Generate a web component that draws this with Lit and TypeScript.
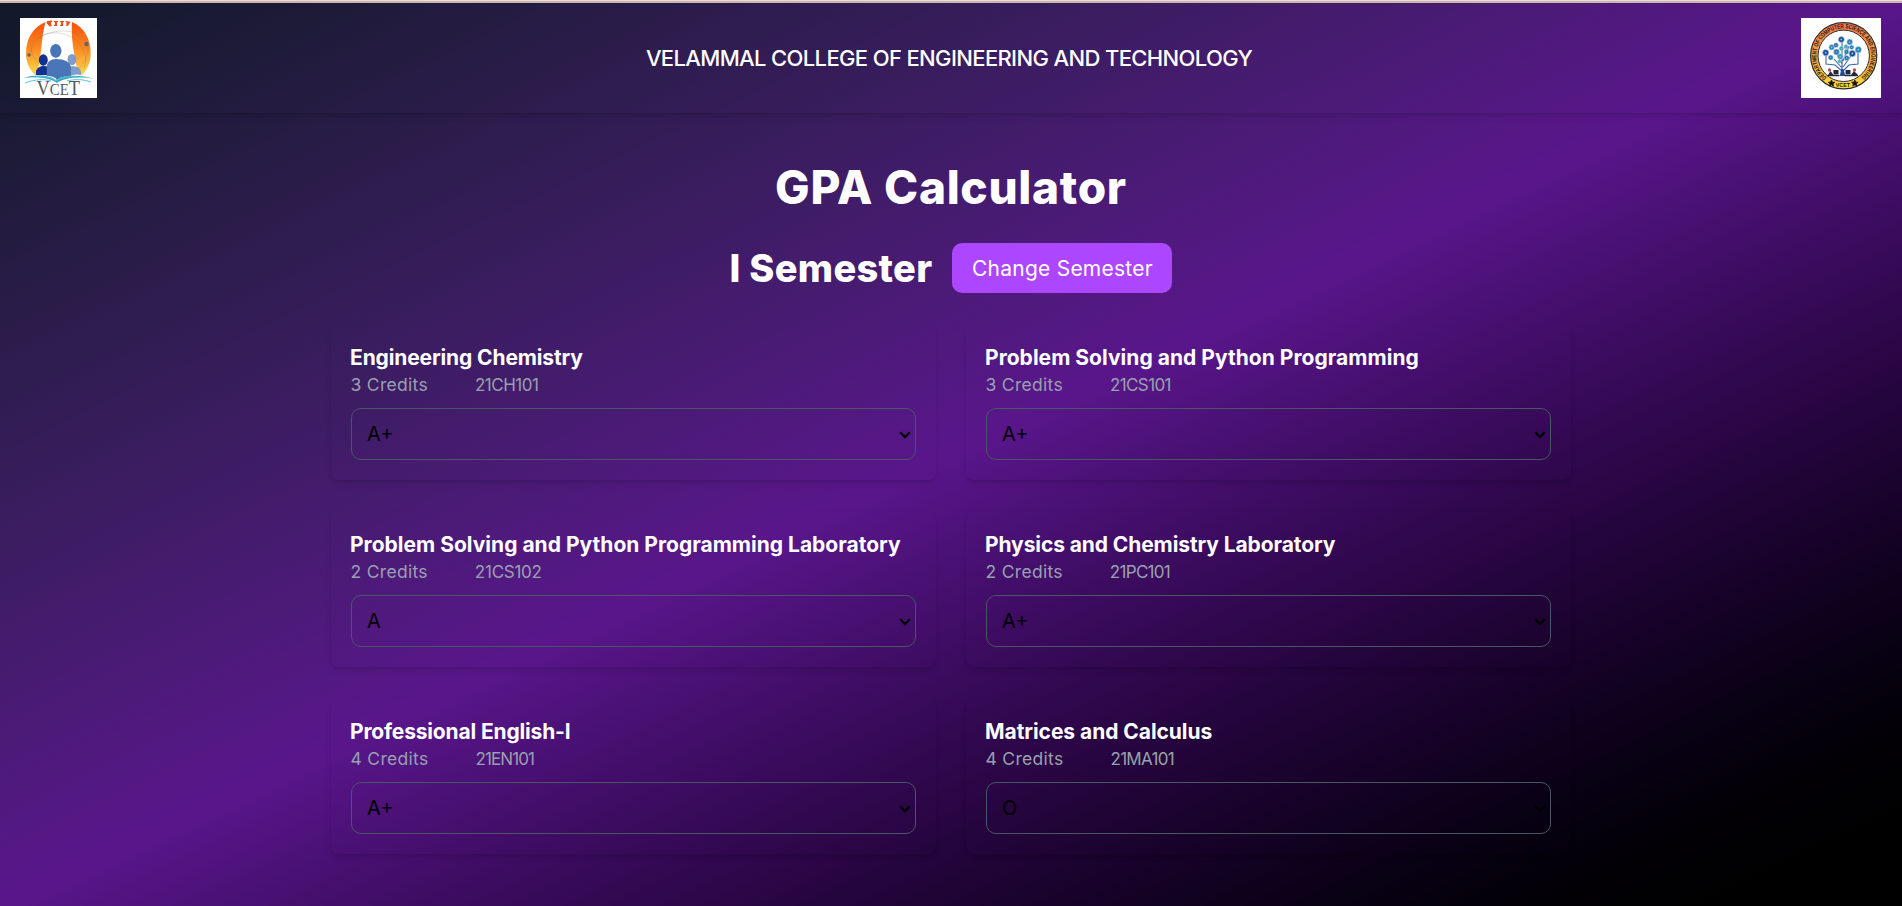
import { LitElement, html, css, svg } from "lit";
import { customElement, property } from "lit/decorators.js";
import { styleMap } from "lit/directives/style-map.js";

interface Course {
  title: string;
  credits: number;
  code: string;
  grade: string;
  /** letter spacing of the title and of the course code, in pixels */
  titleTrack: number;
  codeTrack: number;
}

const COURSES: Course[] = [
  { title: "Engineering Chemistry", credits: 3, code: "21CH101", grade: "A+", titleTrack: -0.13, codeTrack: -0.5 },
  { title: "Problem Solving and Python Programming", credits: 3, code: "21CS101", grade: "A+", titleTrack: 0.03, codeTrack: -0.6 },
  { title: "Problem Solving and Python Programming Laboratory", credits: 2, code: "21CS102", grade: "A", titleTrack: 0.01, codeTrack: -0.25 },
  { title: "Physics and Chemistry Laboratory", credits: 2, code: "21PC101", grade: "A+", titleTrack: -0.1, codeTrack: -0.7 },
  { title: "Professional English-I", credits: 4, code: "21EN101", grade: "A+", titleTrack: -0.16, codeTrack: -0.9 },
  { title: "Matrices and Calculus", credits: 4, code: "21MA101", grade: "O", titleTrack: -0.05, codeTrack: -0.7 },
];

const GRADES = ["O", "A+", "A", "B+", "B", "C"];

@customElement("college-logo")
export class CollegeLogo extends LitElement {
  static styles = css`
    :host { display: block; width: 77px; height: 80px; background: #fff; }
    .art { display: block; }
    .word { font-family: "Liberation Serif", serif; fill: #55565c; }
  `;
  render() {
    return html`<svg class="art" width="77" height="80" viewBox="0 0 77 80">
      <defs>
        <linearGradient id="sun" x1="0" y1="0" x2="0" y2="1">
          <stop offset="0" stop-color="#f9500a" />
          <stop offset="0.5" stop-color="#fb8a22" />
          <stop offset="1" stop-color="#fdd94c" />
        </linearGradient>
      </defs>
      <path d="M25.500 4C13 9 6 21 6 35c0 9 3 16 9 22h2.500c1-8 2.500-16 3.500-24 1-7 1-15 4.500-29z" fill="url(#sun)" />
      <path d="M52 4c12 5 18.700 17 18.700 31 0 9-3 16-8.500 22h-3.500c-2-7-3.500-15-5-24-1.200-8-2.500-18-1.700-29z" fill="url(#sun)" />
      <path d="M27 3l5-.5.4 1.400-1.200.2v3l1 .8-2.700.6-3-3.800zM34 3h4v1l-1 .5v3l1 .5h-4v-1l1-.5V4.500l-1-.5zM40 3h4v1l-1 .5v3l1 .5h-4v-1l1-.5V4.500l-1-.5zM45.500 3l5 .8-2.600 4.200-2.400-.5.900-.8V4.300l-.9-.3z" fill="#e8501c" />
      <path d="M11 38C9 22 25 14 41 13c17-.5 28 8 27 20-1 9-6 15-11 18M13 22C8 32 14 43 24 50M20 19c9-6 24-6 36 3 8 7 12 18 8 28" fill="none" stroke="#777" stroke-opacity=".5" stroke-width=".5" />
      <circle cx="66.500" cy="26" r="2.200" fill="#666" />
      <circle cx="9" cy="37" r="1.800" fill="#666" />
      <g fill="#11308f"><ellipse cx="23.300" cy="42" rx="4.500" ry="5.800" /><path d="M16 57v-4c1-3 4-5 8-5 3 0 5 1 6 3v6z" /></g>
      <g fill="#7f9ccc"><ellipse cx="52" cy="41.500" rx="4.500" ry="5.600" /><path d="M45 59v-9c9-4 16-1 16 4v3c-5-1-10 0-14 2z" /></g>
      <g fill="#4a76b8"><ellipse cx="35.800" cy="32.800" rx="5.700" ry="6.900" /><path d="M26.700 59V49c0-5 4-8 9.300-8 8 0 15 3 15 9v8c-7 0-12 2-14 4-2-3-5-4-10.300-4z" /></g>
      <path d="M3 60c12-4 27-3 33 2 6-5 24-6 38-1-14-3-31-1-37 4-7-5-20-7-34-5z" fill="#36a9c9" />
      <path d="M5 65c10-4 20-4 26-2M71 64c-8-3-17-3-24-1M14 59c9-1 17 0 22 4 5-4 12-5 22-4" fill="none" stroke="#5cc3da" stroke-width="1" />
      <text class="word" x="16.500" y="76.500" font-size="21" textLength="43.500" lengthAdjust="spacingAndGlyphs">V<tspan font-size="17">CE</tspan>T</text>
    </svg>`;
  }
}

@customElement("department-logo")
export class DepartmentLogo extends LitElement {
  static styles = css`
    :host { display: block; width: 80px; height: 80px; background: #fff; }
    .art { display: block; }
    .ring { font: 700 6.200px "Liberation Sans", sans-serif; fill: #2b1608; }
  `;
  render() {
    const nodes: [number, number, number, string][] = [
      [40.300, 21.500, 3, "#1c4d94"], [30.700, 29.300, 2.800, "#3d83b8"], [48.700, 24, 2.900, "#2f80b8"], [24.700, 34.700, 3.100, "#19469b"],
      [35, 27.200, 2.400, "#2865a8"], [45, 28.700, 2.200, "#40a7b7"], [51.300, 35.600, 3.300, "#1b4f98"], [57.300, 31.700, 3.200, "#2b7fb8"],
      [29.700, 39.600, 2.500, "#2a75b0"], [39.300, 38.500, 2.800, "#3794bb"], [45.700, 40, 2.600, "#2b72b0"], [35.500, 34, 2.900, "#2a6cae"],
      [38.300, 43.500, 1.700, "#30b0a0"], [45.500, 33.900, 2.400, "#2369ad"], [40.300, 30.500, 2.300, "#31a4b1"], [50.700, 29.300, 2.200, "#2a75b0"],
    ];
    return html`<svg class="art" width="80" height="80" viewBox="0 0 80 80">
      <defs>
        <linearGradient id="ring" x1="0" y1="0" x2="0" y2="1">
          <stop offset="0" stop-color="#ef7650" />
          <stop offset=".5" stop-color="#f6a343" />
          <stop offset="1" stop-color="#f8dc3c" />
        </linearGradient>
        <path id="arc" d="M25.600 59.300A27.500 27.500 0 1 1 59.600 59.500" />
      </defs>
      <circle cx="42.700" cy="37.800" r="33.100" fill="url(#ring)" stroke="#302c2b" stroke-width="1.200" />
      <circle cx="42.700" cy="37.800" r="25.700" fill="#fff" stroke="#302c2b" stroke-width="1" />
      <text class="ring"><textPath href="#arc" textLength="135" lengthAdjust="spacingAndGlyphs">DEPARTMENT OF COMPUTER SCIENCE AND ENGINEERING</textPath></text>
      <text class="ring" x="34.700" y="69.200" textLength="14.500" lengthAdjust="spacingAndGlyphs">VCET</text>
      <path d="M30.500 62l.9 2.200 2.400.1-1.900 1.500.7 2.300-2.100-1.300-2 1.300.6-2.300-1.900-1.500 2.400-.1zM53.800 62l.9 2.200 2.400.1-1.900 1.500.7 2.300-2.100-1.300-2 1.300.6-2.300-1.900-1.500 2.400-.1z" fill="#111" stroke="#111" stroke-width=".8" />
      <path d="M41 57V24M41 53l-7-6-9-1v-9M41 50l-8-9M42 53l6-6 9-1V34M42 49l8-11M41 46l-5-10M42 43l6-15" fill="none" stroke="#3c64ad" stroke-width="1.100" />
      <path d="M38.800 58l1.500-7h2l2.200 7z" fill="#224a91" />
      ${nodes.map(([x, y, r, c]) => svg`<circle cx=${x} cy=${y} r=${r} fill=${c} stroke="#b9dbea" stroke-width=".6" /><circle cx=${x} cy=${y} r=${r * 0.3} fill="#8fc0dc" />`)}
      <g fill="#23273b"><path d="M32.500 52h5v4.500h-5zM44.500 52h5v4.500h-5zM27 57l2.500-4 3 4zM50 57l3-4 4 4zM26 57h12.500v1.200H26zM44 57h13v1.200H44z" /></g>
      <circle cx="28.500" cy="52" r="1.700" fill="#b0563c" />
      <circle cx="53.500" cy="52" r="1.700" fill="#b0563c" />
    </svg>`;
  }
}

@customElement("course-card")
export class CourseCard extends LitElement {
  @property({ attribute: false }) course!: Course;

  static styles = css`
    :host {
      display: block;
      box-sizing: border-box;
      height: 155px;
      padding: 19px 20px 20px;
      border-radius: 8px;
      box-shadow: 0 4px 6px -1px rgba(0, 0, 0, 0.1), 0 2px 4px -2px rgba(0, 0, 0, 0.1);
    }
    .title { margin: 0 0 0 -1px; height: 28px; font-size: 21px; line-height: 28px; font-weight: 700; color: #fff; white-space: nowrap; }
    .meta { display: flex; gap: 47px; margin-left: -0.5px; height: 25px; font-size: 17px; line-height: 26px; color: #99a1af; }
    .credits { font-size: 17.5px; letter-spacing: 0.3px; }
    .field { display: grid; align-items: center; width: 565px; margin-top: 11px; }
    .grade {
      grid-area: 1 / 1;
      appearance: none;
      box-sizing: border-box;
      width: 565px;
      height: 52px;
      padding: 0 0 0 15px;
      background: transparent;
      border: 1px solid #4a5565;
      border-radius: 10px;
      color: #000;
      font: 400 20px "Inter", sans-serif;
    }
    .chevron { grid-area: 1 / 1; justify-self: end; margin: 2px 5px 0 0; pointer-events: none; }
  `;

  render() {
    const c = this.course;
    return html`
      <h3 class="title" style=${styleMap({ letterSpacing: `${c.titleTrack}px` })}>${c.title}</h3>
      <div class="meta">
        <span class="credits">${c.credits} Credits</span>
        <span style=${styleMap({ letterSpacing: `${c.codeTrack}px` })}>${c.code}</span>
      </div>
      <div class="field">
        <select class="grade">
          ${GRADES.map((g) => html`<option ?selected=${g === c.grade}>${g}</option>`)}
        </select>
        <svg class="chevron" width="12" height="8" viewBox="0 0 12 8">
          <path d="M1.200 1.200L6 6l4.800-4.800" fill="none" stroke="#000" stroke-width="2.300" />
        </svg>
      </div>
    `;
  }
}

@customElement("app-root")
export class AppRoot extends LitElement {
  static styles = css`
    :host {
      display: block;
      box-sizing: border-box;
      height: 906px;
      overflow: hidden;
      font-family: "Inter", "Open Sans", sans-serif;
      background: linear-gradient(to bottom right in oklab, #101828, #59168b, #000);
      color: #fff;
    }
    .strip { height: 1px; background: #ecdcd6; border-bottom: 2px solid #cdb6b0; }
    .bar {
      display: flex;
      align-items: center;
      justify-content: space-between;
      box-sizing: border-box;
      height: 110px;
      padding: 0 21px 0 20px;
      box-shadow: 0 4px 6px -1px rgba(0, 0, 0, 0.1), 0 2px 4px -2px rgba(0, 0, 0, 0.1);
    }
    .college { font-size: 22px; font-weight: 500; letter-spacing: -0.64px; }
    .heading { margin: 46px 0 0; text-align: center; font-size: 46px; line-height: 56px; font-weight: 800; letter-spacing: 0.7px; }
    .semester { display: flex; align-items: center; justify-content: center; gap: 20px; margin-top: 28px; height: 50px; }
    .term { margin: 0; font-size: 38px; font-weight: 800; letter-spacing: 0.3px; }
    .change { width: 220px; height: 50px; padding: 0; border: 0; border-radius: 10px; background: #ad46ff; color: #fff; font: 400 21px "Inter", sans-serif; letter-spacing: 0.25px; }
    .grid { display: grid; grid-template-columns: 605px 605px; column-gap: 30px; row-gap: 32px; width: 1240px; margin: 32px auto 0; }
  `;

  render() {
    return html`
      <div class="strip"></div>
      <header class="bar">
        <college-logo></college-logo>
        <span class="college">VELAMMAL COLLEGE OF ENGINEERING AND TECHNOLOGY</span>
        <department-logo></department-logo>
      </header>
      <main>
        <h1 class="heading">GPA Calculator</h1>
        <div class="semester">
          <h2 class="term">I Semester</h2>
          <button class="change">Change Semester</button>
        </div>
        <section class="grid">
          ${COURSES.map((c) => html`<course-card .course=${c}></course-card>`)}
        </section>
      </main>
    `;
  }
}
